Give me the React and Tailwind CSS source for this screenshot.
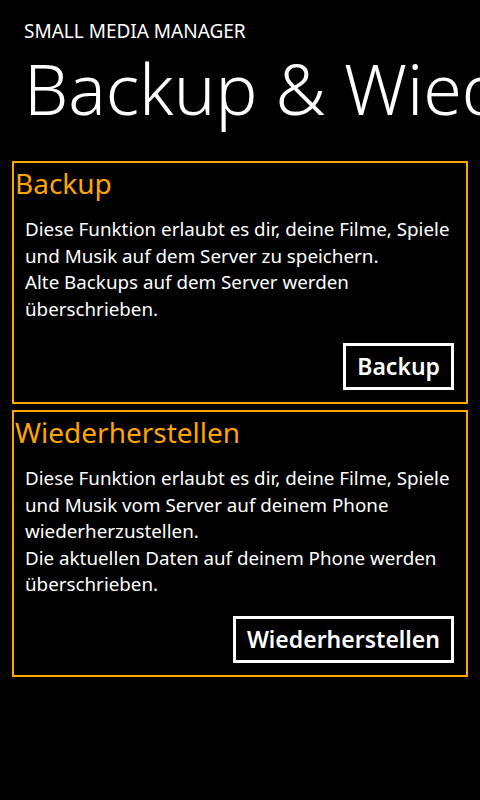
import React from 'react';

const sections = [
    {
        title: 'Backup',
        lines: [
            'Diese Funktion erlaubt es dir, deine Filme, Spiele und Musik auf dem Server zu speichern.',
            'Alte Backups auf dem Server werden überschrieben.',
        ],
        button: 'Backup',
        height: 'h-[243px]',
    },
    {
        title: 'Wiederherstellen',
        lines: [
            'Diese Funktion erlaubt es dir, deine Filme, Spiele und Musik vom Server auf deinem Phone wiederherzustellen.',
            'Die aktuellen Daten auf deinem Phone werden überschrieben.',
        ],
        button: 'Wiederherstellen',
        height: 'h-[267px]',
    },
];

function Panel({ section }) {
    return (
        <div className={`flex flex-col border-2 border-[#ffa500] ${section.height}`}>
            {/* heading */}
            <h2 className="pl-[1px] pt-[2px] text-[28px] leading-[36px] text-[#ffa500]">
                {section.title}
            </h2>
            <div className="mt-[15px] pl-[11px] pr-[10px] text-[18.8px] leading-[26.5px] text-white">
                {section.lines.map((l, i) => (
                    <p key={i}>{l}</p>
                ))}
            </div>
            <div className="mt-auto flex justify-end pr-[12px] pb-[12px]">
                <button className="h-[47px] border-[3px] border-white px-[11px] text-[23px] font-semibold text-white">
                    {section.button}
                </button>
            </div>
        </div>
    );
}

export default function App() {
    return (
        <div
            className="min-h-[800px] w-[480px] overflow-hidden bg-black text-white"
            style={{ fontFamily: '"Noto Sans", "Open Sans", sans-serif' }}
        >
            <div className="pl-[24px] pt-[19px]">
                <div className="text-[19px] leading-[24px]">SMALL MEDIA MANAGER</div>
                <h1 className="mt-[6px] whitespace-nowrap text-[70px] font-light leading-[78px]">
                    Backup &amp; Wiederherstellen
                </h1>
            </div>
            <div className="mx-[12px] mt-[34px] flex flex-col gap-[6px]">
                {sections.map((s) => (
                    <Panel key={s.title} section={s} />
                ))}
            </div>
        </div>
    );
}
